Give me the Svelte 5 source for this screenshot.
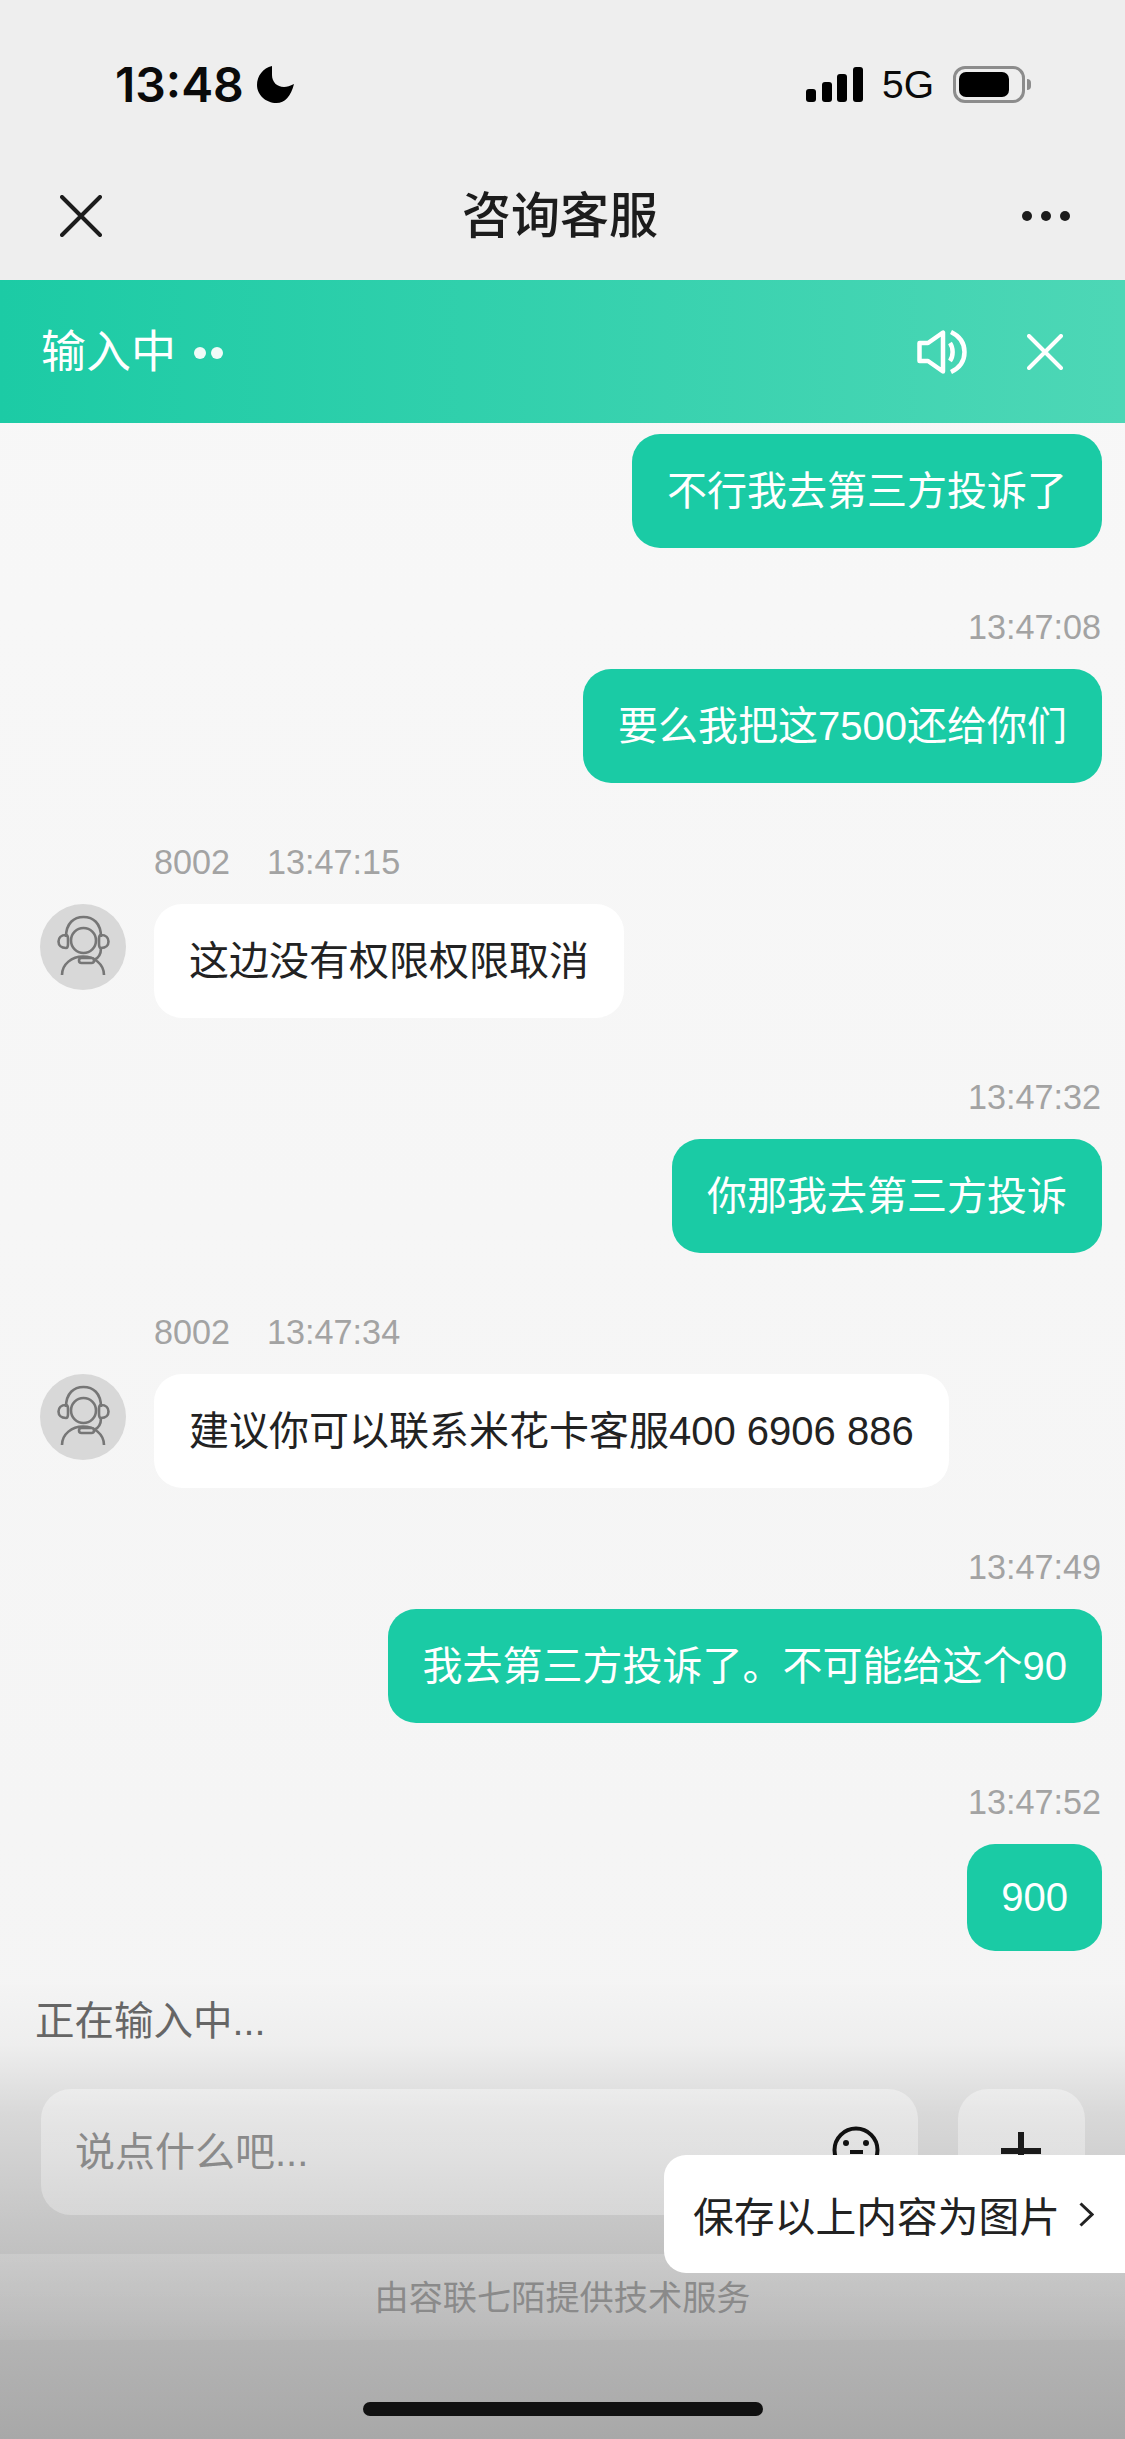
<script>
  const messages = [
    { side: 'right', text: '不行我去第三方投诉了', first: true },
    { side: 'right', time: '13:47:08', text: '要么我把这7500还给你们' },
    { side: 'left', agent: '8002', time: '13:47:15', text: '这边没有权限权限取消' },
    { side: 'right', time: '13:47:32', text: '你那我去第三方投诉' },
    { side: 'left', agent: '8002', time: '13:47:34', text: '建议你可以联系米花卡客服400 6906 886' },
    { side: 'right', time: '13:47:49', text: '我去第三方投诉了。不可能给这个90' },
    { side: 'right', time: '13:47:52', text: '900', short: true }
  ];
</script>

<div class="page">
  <header class="top">
    <div class="status">
      <div class="clock">
        <span>13:48</span>
        <svg class="moon" viewBox="0 0 37 37" width="37" height="37"><path d="M15 0C6 2 0 10 0 19 0 29 9 37 19.500 37 28 37 34 30 37 18 33 20 30 21 27 21 20 21 15 16 15 9 15 6 15 3 15 0Z" fill="#000"/></svg>
      </div>
      <div class="indicators">
        <div class="signal"><i class="b1"></i><i class="b2"></i><i class="b3"></i><i class="b4"></i></div>
        <span class="net">5G</span>
        <div class="battery"><div class="level"></div></div>
        <div class="cap"></div>
      </div>
    </div>
    <div class="nav">
      <svg class="nav-x" viewBox="0 0 42 42" width="42" height="42"><path d="M2 2 40 40M40 2 2 40" stroke="#1c1c1c" stroke-width="4" fill="none" stroke-linecap="round"/></svg>
      <h1>咨询客服</h1>
      <div class="more"><i></i><i></i><i></i></div>
    </div>
  </header>

  <div class="banner">
    <div class="typing">输入中 <span class="dots"><i></i><i></i></span></div>
    <div class="banner-actions">
      <svg viewBox="0 0 50 44" width="50" height="44" fill="none" stroke="#fff" stroke-width="4.500" stroke-linecap="round" stroke-linejoin="round">
        <path d="M2.500 13H11L26 2.500V41.500L11 31H2.500Z"/>
        <path d="M33 13c3.500 5 3.500 13 0 18" stroke-linecap="butt"/>
        <path d="M34 2c10.500 5 13.500 12 13.500 20S44.500 37 34 42" stroke-linecap="butt"/>
      </svg>
      <svg viewBox="0 0 36 36" width="36" height="36"><path d="M2 2 34 34M34 2 2 34" stroke="#fff" stroke-width="4" fill="none" stroke-linecap="round"/></svg>
    </div>
  </div>

  <main class="chat">
    {#each messages as m}
      <section class="msg {m.side}" class:first={m.first}>
        {#if m.time}
          <div class="meta">
            {#if m.agent}<span class="agent">{m.agent}</span>{/if}
            <span>{m.time}</span>
          </div>
        {/if}
        <div class="line">
          {#if m.side === 'left'}
            <svg class="avatar" viewBox="0 0 86 86" width="86" height="86" fill="none" stroke="#767676" stroke-width="2.600">
              <circle cx="43" cy="43" r="43" fill="#d8d8d8" stroke="none"/>
              <circle cx="43.500" cy="36.500" r="12.500"/>
              <path d="M26 33C26 19 34 13 43.500 13S61 19 61 33"/>
              <path d="M26 31C21 31 18.500 34 18.500 37.500S21 44 26 44C28 44 28 42 28 40V35C28 33 28 31 26 31Z"/>
              <path d="M61 31C66 31 68.500 34 68.500 37.500S66 44 61 44C59 44 59 42 59 40V35C59 33 59 31 61 31Z"/>
              <path d="M22 71C22 60 32 52.500 43 52.500S64 60 64 71"/>
              <rect x="39" y="54" width="15" height="5" rx="2.500" fill="#d8d8d8"/>
              <path d="M61 44C61 50 59 54 54 56"/>
            </svg>
          {/if}
          <div class="bubble" class:short={m.short}>{m.text}</div>
        </div>
      </section>
    {/each}
  </main>

  <footer class="bottom">
    <div class="typing-note">正在输入中...</div>
    <div class="composer">
      <div class="field">
        <span>说点什么吧...</span>
        <svg viewBox="0 0 48 48" width="48" height="48" fill="none" stroke="#111" stroke-width="4">
          <circle cx="24" cy="24" r="21.500"/>
          <circle cx="14" cy="17" r="3" fill="#111" stroke="none"/>
          <circle cx="34" cy="17" r="3" fill="#111" stroke="none"/>
          <path d="M18 26H31"/>
        </svg>
      </div>
      <div class="plus"><i class="h"></i><i class="v"></i></div>
    </div>
    <div class="powered">由容联七陌提供技术服务</div>
    <div class="home-area"><div class="home"></div></div>
  </footer>

  <div class="save">
    <span>保存以上内容为图片</span>
    <svg viewBox="0 0 15 25" width="15" height="25"><path d="M1.500 1.500 13 12.500 1.500 23.500" fill="none" stroke="#222" stroke-width="3"/></svg>
  </div>
</div>

<style>
  :global(body) {
    margin: 0;
  }
  .page {
    position: relative;
    width: 1125px;
    height: 2439px;
    overflow: hidden;
    display: flex;
    flex-direction: column;
    font-family: "Liberation Sans", "Noto Sans CJK SC", sans-serif;
    background: linear-gradient(#f8f8f8, #f4f4f4);
    color: #222;
  }
  i {
    display: block;
  }
  .top {
    height: 280px;
    background: #eeeeee;
    flex: none;
  }
  .status {
    height: 140px;
    box-sizing: border-box;
    padding: 66px 94px 0 115px;
    display: flex;
    justify-content: space-between;
    align-items: flex-start;
  }
  .clock {
    display: flex;
    align-items: flex-start;
    gap: 13px;
    font-family: Inter, "Liberation Sans", sans-serif;
    font-size: 48px;
    font-weight: 600;
    line-height: 37px;
    color: #0a0a0a;
  }
  .indicators {
    display: flex;
    align-items: center;
    height: 37px;
  }
  .signal {
    display: flex;
    align-items: flex-end;
    gap: 5.500px;
    height: 35px;
  }
  .signal i {
    width: 10px;
    background: #000;
    border-radius: 3px;
  }
  .b1 { height: 13px; }
  .b2 { height: 20px; }
  .b3 { height: 28px; }
  .b4 { height: 35px; }
  .net {
    font-size: 39px;
    line-height: 37px;
    margin-left: 19px;
    color: #0a0a0a;
  }
  .battery {
    margin-left: 19px;
    width: 72px;
    height: 37px;
    box-sizing: border-box;
    border: 3px solid #8c8c8c;
    border-radius: 12px;
    padding: 3px;
  }
  .level {
    width: 50px;
    height: 25px;
    background: #000;
    border-radius: 7px;
  }
  .cap {
    width: 4px;
    height: 11px;
    margin-left: 2px;
    background: #8c8c8c;
    border-radius: 0 4px 4px 0;
  }
  .nav {
    height: 140px;
    box-sizing: border-box;
    padding: 12px 55px 0 60px;
    display: flex;
    align-items: center;
    justify-content: space-between;
  }
  .nav h1 {
    margin: 0 4px 0 0;
    font-size: 49px;
    line-height: 60px;
    font-weight: 500;
    color: #1c1c1c;
  }
  .more {
    display: flex;
    gap: 9px;
  }
  .more i {
    width: 10px;
    height: 10px;
    border-radius: 50%;
    background: #1c1c1c;
  }
  .banner {
    height: 143px;
    flex: none;
    background: linear-gradient(90deg, #1ccba5, #4dd7b6);
    display: flex;
    align-items: center;
    justify-content: space-between;
    padding: 0 62px 0 41px;
    color: #fff;
  }
  .typing {
    display: flex;
    align-items: center;
    gap: 18px;
    font-size: 45px;
    line-height: 60px;
    padding-top: 3px;
  }
  .dots {
    display: flex;
    gap: 5px;
  }
  .dots i {
    width: 12px;
    height: 12px;
    border-radius: 50%;
    background: #f0fbf8;
  }
  .banner-actions {
    display: flex;
    align-items: center;
    gap: 60px;
  }
  .chat {
    flex: 1;
    min-height: 0;
    overflow: hidden;
    padding: 11px 23px 0 40px;
  }
  .msg {
    margin-top: 59px;
  }
  .msg.first {
    margin-top: 0;
  }
  .meta {
    height: 40px;
    margin-bottom: 22px;
    font-size: 34.200px;
    line-height: 40px;
    color: #a3a3a3;
  }
  .msg.right .meta {
    text-align: right;
    padding-right: 1px;
  }
  .msg.left .meta {
    padding-left: 114px;
    display: flex;
    gap: 37px;
  }
  .line {
    display: flex;
    align-items: flex-start;
  }
  .msg.right .line {
    justify-content: flex-end;
  }
  .avatar {
    flex: none;
    margin-right: 28px;
  }
  .bubble {
    box-sizing: border-box;
    height: 114px;
    padding: 0 35px;
    border-radius: 28px;
    font-size: 40px;
    line-height: 115px;
    white-space: nowrap;
  }
  .bubble.short {
    height: 107px;
    line-height: 107px;
    padding: 0 34px;
  }
  .msg.right .bubble {
    background: #1acba5;
    color: #fff;
  }
  .msg.left .bubble {
    background: #fff;
    color: #222;
  }
  .bottom {
    flex: none;
    height: 454px;
    background: linear-gradient(#f4f4f4 0, #eeeeee 60px, #d8d8d8 130px, #c2c2c2 260px, #b4b4b4 355px, #a8a8a8 454px);
  }
  .typing-note {
    height: 72px;
    padding-left: 35px;
    font-size: 39.500px;
    line-height: 72px;
    color: #666;
  }
  .composer {
    margin-top: 32px;
    display: flex;
    gap: 40px;
    padding: 0 40px 0 41px;
  }
  .field {
    flex: 1;
    height: 126px;
    box-sizing: border-box;
    border-radius: 30px;
    background: linear-gradient(rgba(255,255,255,.38), rgba(255,255,255,.28));
    display: flex;
    align-items: center;
    justify-content: space-between;
    padding: 0 38px 0 34px;
    font-size: 40px;
    line-height: 124px;
    color: #8a8a8a;
  }
  .field svg {
    margin-top: -4px;
  }
  .plus {
    position: relative;
    flex: none;
    width: 127px;
    height: 126px;
    border-radius: 30px;
    background: linear-gradient(rgba(255,255,255,.38), rgba(255,255,255,.28));
  }
  .plus .h {
    position: absolute;
    left: 43px;
    top: 59px;
    width: 40px;
    height: 6px;
    background: #1a1a1a;
  }
  .plus .v {
    position: absolute;
    left: 60px;
    top: 43px;
    width: 6px;
    height: 40px;
    background: #1a1a1a;
  }
  .powered {
    margin-top: 39px;
    height: 86px;
    background: linear-gradient(rgba(255,255,255,.16), rgba(255,255,255,.06));
    text-align: center;
    font-size: 34.200px;
    line-height: 88px;
    color: #8a8a8a;
  }
  .home-area {
    height: 99px;
    box-sizing: border-box;
    padding-top: 62px;
    display: flex;
    justify-content: center;
  }
  .home {
    width: 400px;
    height: 14px;
    border-radius: 7px;
    background: #111;
  }
  .save {
    position: absolute;
    left: 664px;
    right: 0;
    top: 2155px;
    height: 118px;
    box-sizing: border-box;
    background: #fff;
    border-radius: 22px 0 0 22px;
    display: flex;
    align-items: center;
    gap: 19px;
    padding-left: 29px;
    font-size: 40.800px;
    color: #222;
  }
</style>
